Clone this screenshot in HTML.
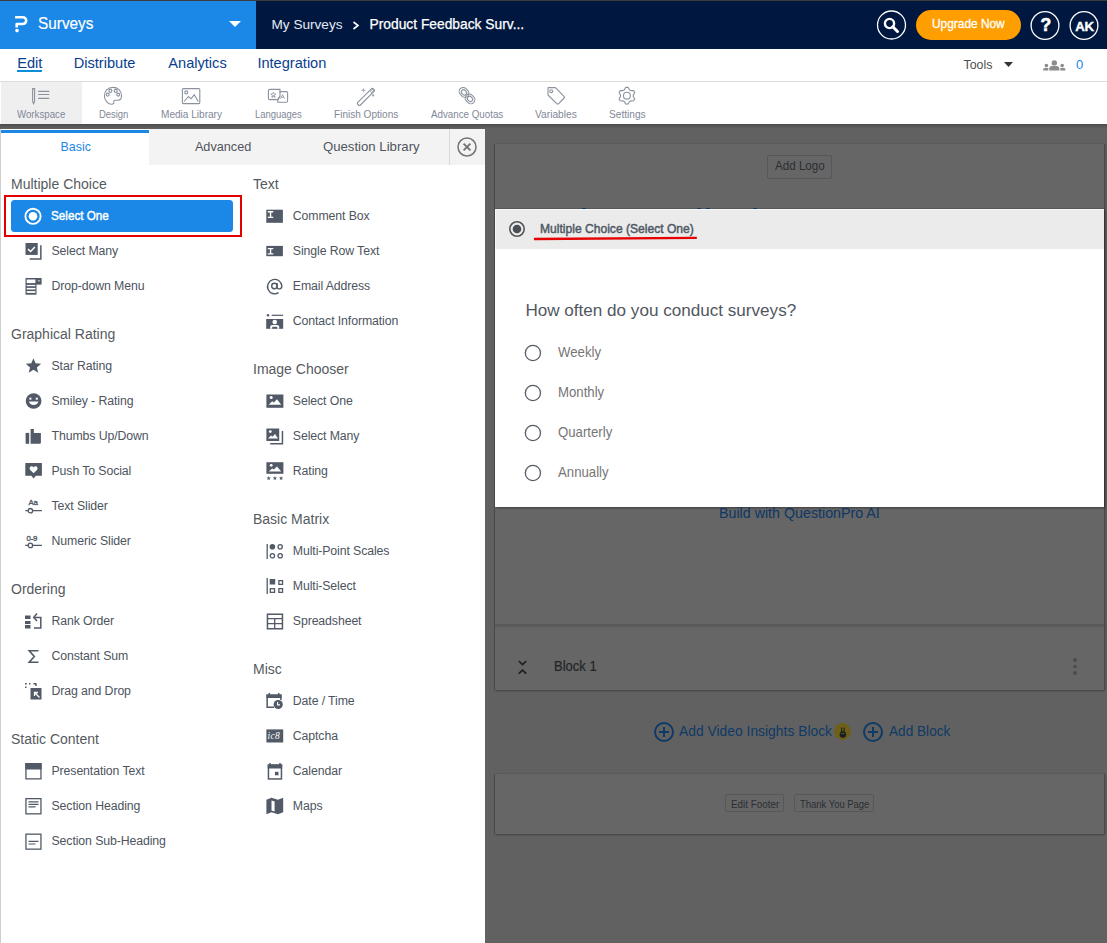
<!DOCTYPE html>
<html><head><meta charset="utf-8"><title>Surveys</title>
<style>
html,body{margin:0;padding:0;}
body{width:1107px;height:943px;overflow:hidden;position:relative;background:#616161;font-family:"Liberation Sans", sans-serif;}
.t{position:absolute;white-space:nowrap;line-height:1;}
svg{overflow:visible}
</style></head><body>
<div style="position:absolute;left:0px;top:0px;width:1107px;height:1px;background:#3c3c3c"></div>
<div style="position:absolute;left:0px;top:1px;width:256px;height:48px;background:#1b87e6"></div>
<div style="position:absolute;left:256px;top:1px;width:851px;height:48px;background:#001840"></div>
<svg style="position:absolute;left:10px;top:10px;" width="24" height="26" viewBox="0 0 24 26"><path d="M5.1 7.2 H12.8 A3.375 3.375 0 0 1 12.8 13.95 H6.7 V17.4" fill="none" stroke="#fff" stroke-width="2.6" stroke-linejoin="round"/><circle cx="7" cy="20.6" r="1.8" fill="#fff"/></svg>
<div class="t" style="left:38.3px;top:15.8px;font-size:16.8px;color:#fff;font-weight:400;letter-spacing:0px;transform:scaleX(0.915);transform-origin:0 0;-webkit-text-stroke:0.2px #fff">Surveys</div>
<svg style="position:absolute;left:229px;top:21px;" width="12" height="6" viewBox="0 0 12 6"><path d="M0 0 H12 L6 6 Z" fill="#fff"/></svg>
<div class="t" style="left:271.5px;top:17.8px;font-size:13.6px;color:#e6ebf5;font-weight:400;letter-spacing:0px;">My Surveys</div>
<svg style="position:absolute;left:352px;top:21px;" width="8" height="9" viewBox="0 0 8 9"><path d="M1.5 1 L6 4.5 L1.5 8" fill="none" stroke="#fff" stroke-width="1.6"/></svg>
<div class="t" style="left:369.5px;top:17.8px;font-size:13.8px;color:#fff;font-weight:400;letter-spacing:0px;-webkit-text-stroke:0.25px #fff">Product Feedback Surv...</div>
<svg style="position:absolute;left:876px;top:10px;" width="31" height="31" viewBox="0 0 31 31"><circle cx="15.5" cy="15" r="14" fill="none" stroke="#fff" stroke-width="1.3"/><circle cx="13.5" cy="13.5" r="4.6" fill="none" stroke="#fff" stroke-width="2.4"/><path d="M16.8 16.8 L21.5 21.5" stroke="#fff" stroke-width="3" stroke-linecap="round"/></svg>
<div style="position:absolute;left:916px;top:10px;width:105px;height:30px;background:#ff9e00;border-radius:15px"></div>
<div class="t" style="left:932.0px;top:19.4px;font-size:11.9px;color:#fff;font-weight:400;letter-spacing:0px;-webkit-text-stroke:0.3px #fff">Upgrade Now</div>
<svg style="position:absolute;left:1030.3px;top:10.9px;" width="30" height="30" viewBox="0 0 30 30"><circle cx="15" cy="14.5" r="13.9" fill="none" stroke="#fff" stroke-width="1.3"/></svg>
<div class="t" style="left:1040.4px;top:16.9px;font-size:17.5px;color:#fff;font-weight:700;letter-spacing:0px;-webkit-text-stroke:0.6px #fff">?</div>
<svg style="position:absolute;left:1069.4px;top:10.9px;" width="30" height="30" viewBox="0 0 30 30"><circle cx="15" cy="14.5" r="13.9" fill="none" stroke="#fff" stroke-width="1.3"/></svg>
<div class="t" style="left:1075.3px;top:19.7px;font-size:13.2px;color:#fff;font-weight:700;letter-spacing:-0.3px;-webkit-text-stroke:0.4px #fff">AK</div>
<div style="position:absolute;left:0px;top:49px;width:1107px;height:32px;background:#fff"></div>
<div style="position:absolute;left:0px;top:81px;width:1107px;height:1px;background:#dcdcdc"></div>
<div class="t" style="left:17.2px;top:55.6px;font-size:14.6px;color:#073e8e;font-weight:400;letter-spacing:0px;">Edit</div>
<div class="t" style="left:73.7px;top:55.6px;font-size:14.6px;color:#073e8e;font-weight:400;letter-spacing:0px;">Distribute</div>
<div class="t" style="left:168.3px;top:55.6px;font-size:14.6px;color:#073e8e;font-weight:400;letter-spacing:0px;">Analytics</div>
<div class="t" style="left:257.4px;top:55.6px;font-size:14.6px;color:#073e8e;font-weight:400;letter-spacing:0px;">Integration</div>
<div style="position:absolute;left:17px;top:70px;width:25px;height:2px;background:#0a8fd8"></div>
<div class="t" style="left:963.5px;top:58.5px;font-size:12.4px;color:#4f4f4f;font-weight:400;letter-spacing:0px;">Tools</div>
<svg style="position:absolute;left:1004px;top:62px;" width="9" height="5" viewBox="0 0 9 5"><path d="M0 0 H9 L4.5 5 Z" fill="#333"/></svg>
<svg style="position:absolute;left:1042px;top:57px;" width="24" height="14" viewBox="0 0 24 14"><circle cx="12.3" cy="5.9" r="2.7" fill="#8c8c8c"/><path d="M7.3 13.6 V11.5 Q7.3 9 10 9 H14.6 Q17.3 9 17.3 11.5 V13.6 Z" fill="#8c8c8c"/><circle cx="4.4" cy="8.6" r="1.8" fill="#8c8c8c"/><path d="M1.3 13.6 V12.3 Q1.3 10.9 2.8 10.9 H6.3 V13.6 Z" fill="#8c8c8c"/><circle cx="20.2" cy="8.6" r="1.8" fill="#8c8c8c"/><path d="M23.3 13.6 V12.3 Q23.3 10.9 21.8 10.9 H18.3 V13.6 Z" fill="#8c8c8c"/></svg>
<div class="t" style="left:1076.0px;top:58.0px;font-size:13px;color:#1b87e6;font-weight:400;letter-spacing:0px;">0</div>
<div style="position:absolute;left:0px;top:82px;width:1107px;height:42px;background:#fff"></div>
<div style="position:absolute;left:1px;top:82px;width:81px;height:42px;background:#efefef"></div>
<div class="t" style="left:17.2px;top:108.8px;font-size:11px;color:#7f8898;font-weight:400;letter-spacing:0px;transform:scaleX(0.881);transform-origin:0 0">Workspace</div>
<div class="t" style="left:98.7px;top:108.8px;font-size:11px;color:#7f8898;font-weight:400;letter-spacing:0px;transform:scaleX(0.856);transform-origin:0 0">Design</div>
<div class="t" style="left:160.8px;top:108.8px;font-size:11px;color:#7f8898;font-weight:400;letter-spacing:0px;transform:scaleX(0.915);transform-origin:0 0">Media Library</div>
<div class="t" style="left:254.7px;top:108.8px;font-size:11px;color:#7f8898;font-weight:400;letter-spacing:0px;transform:scaleX(0.858);transform-origin:0 0">Languages</div>
<div class="t" style="left:333.7px;top:108.8px;font-size:11px;color:#7f8898;font-weight:400;letter-spacing:0px;transform:scaleX(0.914);transform-origin:0 0">Finish Options</div>
<div class="t" style="left:430.8px;top:108.8px;font-size:11px;color:#7f8898;font-weight:400;letter-spacing:0px;transform:scaleX(0.888);transform-origin:0 0">Advance Quotas</div>
<div class="t" style="left:534.9px;top:108.8px;font-size:11px;color:#7f8898;font-weight:400;letter-spacing:0px;transform:scaleX(0.928);transform-origin:0 0">Variables</div>
<div class="t" style="left:608.7px;top:108.8px;font-size:11px;color:#7f8898;font-weight:400;letter-spacing:0px;transform:scaleX(0.921);transform-origin:0 0">Settings</div>
<svg style="position:absolute;left:0;top:0" width="700" height="124" viewBox="0 0 700 124"><path d="M32.6 88.6 H34.6 V101.5 L33.6 103.6 L32.6 101.5 Z" fill="none" stroke="#8a929e" stroke-width="1.1"/><path d="M38.1 91.4 H49.3 M38.1 94.5 H49.3 M38.1 98.4 H49.3" fill="none" stroke="#8a929e" stroke-width="1.1"/><path d="M113 87.4 C107.6 87.4 104.4 91.5 104.4 95.8 C104.4 100.8 108.3 104.3 111.6 104.3 C113.4 104.3 114.3 103.4 113.9 102.2 C113.4 100.9 114 100.2 115.3 100.2 H118 C120.4 100.2 121.5 98.3 121.5 95.8 C121.5 90.8 117.6 87.4 113 87.4 Z" fill="none" stroke="#8a929e" stroke-width="1.1"/><circle cx="110.4" cy="90.9" r="1.5" fill="none" stroke="#8a929e" stroke-width="1.1"/><circle cx="115.7" cy="90.9" r="1.5" fill="none" stroke="#8a929e" stroke-width="1.1"/><circle cx="107.7" cy="94.6" r="1.5" fill="none" stroke="#8a929e" stroke-width="1.1"/><circle cx="118.2" cy="94.6" r="1.5" fill="none" stroke="#8a929e" stroke-width="1.1"/><rect x="182.4" y="88.6" width="17.4" height="15" rx="1" fill="none" stroke="#8a929e" stroke-width="1.1"/><circle cx="186.2" cy="92.4" r="1.5" fill="none" stroke="#8a929e" stroke-width="1.1"/><path d="M184 101.5 L188.5 96.5 L191 98.8 L194.2 94.8 L198.2 101.5" fill="none" stroke="#8a929e" stroke-width="1.1"/><path d="M269.8 89.4 H280 V96.5 L277.6 99.6 H269.8 Q268.4 99.6 268.4 98.2 V90.8 Q268.4 89.4 269.8 89.4 Z" fill="none" stroke="#8a929e" stroke-width="1.1"/><path d="M279.5 91.6 H286.2 Q287.6 91.6 287.6 93 V100.8 Q287.6 102.2 286.2 102.2 H277.8 V99.6" fill="none" stroke="#8a929e" stroke-width="1.1" fill="#fff"/><path d="M277.8 99.6 L279.8 96.5" fill="none" stroke="#8a929e" stroke-width="1.1"/><path d="M273.4 92.2 L274.1 94 L276 94 L274.5 95.1 L275.1 96.9 L273.4 95.8 L271.7 96.9 L272.3 95.1 L270.8 94 L272.7 94 Z M272 98.2 L273.4 95.8 L275.2 98.2" fill="none" stroke="#8a929e" stroke-width="0.7"/><path d="M280.6 98.8 L282.6 94.6 L284.6 98.8 M281.4 97.3 H283.8" fill="none" stroke="#8a929e" stroke-width="0.8"/><path d="M357.8 102.4 L371.4 88.8 Q372.4 87.8 373.4 88.8 L374 89.4 Q375 90.4 374 91.4 L360.4 105 Q359.4 106 358.4 105 L357.8 104.4 Q356.8 103.4 357.8 102.4 Z" fill="none" stroke="#8a929e" stroke-width="1.1"/><path d="M369.6 90.6 L372.2 93.2 M370.8 89.6 L373.2 92 M371.8 88.8 L374 91" stroke="#8a929e" stroke-width="0.8"/><path d="M363.4 87.8 L364.1 89.6 L365.9 90.3 L364.1 91 L363.4 92.8 L362.7 91 L360.9 90.3 L362.7 89.6 Z" fill="#aab0b9"/><circle cx="373.1" cy="95.4" r="1.1" fill="#9aa1ab"/><g transform="rotate(-45 464 92.4)"><rect x="460" y="87.2" width="8" height="10.4" rx="4" fill="none" stroke="#8a929e" stroke-width="1.1"/><rect x="461.8" y="89.6" width="4.4" height="5.6" rx="2.2" fill="none" stroke="#8a929e" stroke-width="1.1"/></g><g transform="rotate(-45 470 98.9)"><rect x="466" y="93.7" width="8" height="10.4" rx="4" fill="none" stroke="#8a929e" stroke-width="1.1"/><rect x="467.8" y="96.1" width="4.4" height="5.6" rx="2.2" fill="none" stroke="#8a929e" stroke-width="1.1"/></g><path d="M548.2 87.6 H555.5 L564.2 96.6 Q564.8 97.3 564.2 98 L558.4 103.8 Q557.7 104.4 557 103.8 L548 95 V88 Z" fill="none" stroke="#8a929e" stroke-width="1.1" stroke-linejoin="round"/><circle cx="551.2" cy="91.2" r="1.4" fill="none" stroke="#8a929e" stroke-width="1.1"/><path d="M626.90,87.30 L628.00,87.37 L628.82,88.55 L629.35,89.79 L630.10,90.16 L630.80,90.62 L632.13,90.47 L633.56,90.59 L634.17,91.50 L634.66,92.49 L634.05,93.78 L633.25,94.86 L633.30,95.70 L633.25,96.54 L634.05,97.62 L634.66,98.91 L634.17,99.90 L633.56,100.81 L632.13,100.93 L630.80,100.78 L630.10,101.24 L629.35,101.61 L628.82,102.85 L628.00,104.03 L626.90,104.10 L625.80,104.03 L624.98,102.85 L624.45,101.61 L623.70,101.24 L623.00,100.78 L621.67,100.93 L620.24,100.81 L619.63,99.90 L619.14,98.91 L619.75,97.62 L620.55,96.54 L620.50,95.70 L620.55,94.86 L619.75,93.78 L619.14,92.49 L619.63,91.50 L620.24,90.59 L621.67,90.47 L623.00,90.62 L623.70,90.16 L624.45,89.79 L624.98,88.55 L625.80,87.37 Z" fill="none" stroke="#8a929e" stroke-width="1.1" stroke-linejoin="round"/><circle cx="626.9" cy="95.7" r="3.4" fill="none" stroke="#8a929e" stroke-width="1.1"/></svg>
<div style="position:absolute;left:0px;top:124px;width:1107px;height:819px;background:#616161"></div>
<div style="position:absolute;left:0px;top:124px;width:1107px;height:5px;background:linear-gradient(#4a4a4a,#5c5c5c 60%,#616161)"></div>
<div style="position:absolute;left:0px;top:129px;width:485px;height:814px;background:#fff"></div>
<div style="position:absolute;left:0px;top:129px;width:1px;height:814px;background:#cfcfcf"></div>
<div style="position:absolute;left:149px;top:129px;width:336px;height:36px;background:#f3f3f3"></div>
<div style="position:absolute;left:449px;top:129px;width:1px;height:36px;background:#d9d9d9"></div>
<div style="position:absolute;left:1px;top:130px;width:148px;height:3px;background:#1b87e6"></div>
<div class="t" style="left:60.6px;top:140.5px;font-size:12.4px;color:#1b87e6;font-weight:400;letter-spacing:0px;">Basic</div>
<div class="t" style="left:194.9px;top:140.8px;font-size:12.7px;color:#50555c;font-weight:400;letter-spacing:0px;">Advanced</div>
<div class="t" style="left:322.9px;top:139.8px;font-size:13.2px;color:#50555c;font-weight:400;letter-spacing:0px;">Question Library</div>
<svg style="position:absolute;left:457px;top:137px;" width="20" height="20" viewBox="0 0 20 20"><circle cx="10" cy="10" r="9" fill="none" stroke="#737373" stroke-width="1.5"/><path d="M6.6 6.6 L13.4 13.4 M13.4 6.6 L6.6 13.4" stroke="#737373" stroke-width="1.9"/></svg>
<div class="t" style="left:11.0px;top:176.9px;font-size:14px;color:#555a60;font-weight:400;letter-spacing:0px;">Multiple Choice</div>
<div style="position:absolute;left:10.8px;top:200px;width:222.2px;height:32px;background:#1b87e6;border-radius:3.5px"></div>
<svg style="position:absolute;left:24px;top:207px;" width="18" height="18" viewBox="0 0 18 18"><circle cx="9" cy="9.3" r="7.6" fill="none" stroke="#fff" stroke-width="1.9"/><circle cx="9" cy="9.3" r="4.3" fill="#fff"/></svg>
<div class="t" style="left:50.9px;top:208.5px;font-size:13.6px;color:#fff;font-weight:400;letter-spacing:0px;transform:scaleX(0.86);transform-origin:0 0;-webkit-text-stroke:0.45px #fff">Select One</div>
<div style="position:absolute;left:4px;top:195px;width:237.6px;height:41.6px;border:2px solid #e30000;box-sizing:border-box"></div>
<div class="t" style="left:51.5px;top:245.1px;font-size:12.3px;color:#4d545e;font-weight:400;letter-spacing:-0.1px;">Select Many</div>
<svg style="position:absolute;left:23.5px;top:242px;" width="20" height="20" viewBox="0 0 20 20"><rect x="1.5" y="1" width="12.2" height="11.9" fill="#515a66"/><path d="M4 7.1 L6.6 9.5 L10.9 5.1" fill="none" stroke="#fff" stroke-width="1.5"/><path d="M16.85 3.3 V16.9 H5.7" fill="none" stroke="#515a66" stroke-width="1.5"/></svg>
<div class="t" style="left:51.5px;top:280.1px;font-size:12.3px;color:#4d545e;font-weight:400;letter-spacing:-0.1px;">Drop-down Menu</div>
<svg style="position:absolute;left:23.5px;top:277px;" width="20" height="20" viewBox="0 0 20 20"><rect x="1.5" y="1" width="11" height="16.7" fill="#515a66"/><rect x="12" y="1" width="5.6" height="6.6" fill="#515a66"/><rect x="2.7" y="2.5" width="8.7" height="3.6" fill="#fff"/><rect x="2.7" y="7.9" width="8.7" height="1.3" fill="#fff"/><rect x="2.7" y="10.9" width="8.7" height="1.6" fill="#fff"/><rect x="2.7" y="14.1" width="8.7" height="1.8" fill="#fff"/><path d="M13.5 3.2 H16.3 L14.9 5 Z" fill="#c9ccd1"/></svg>
<div class="t" style="left:11.0px;top:326.9px;font-size:14px;color:#555a60;font-weight:400;letter-spacing:0px;">Graphical Rating</div>
<div class="t" style="left:51.5px;top:360.1px;font-size:12.3px;color:#4d545e;font-weight:400;letter-spacing:-0.1px;">Star Rating</div>
<svg style="position:absolute;left:23.5px;top:357px;" width="20" height="20" viewBox="0 0 20 20"><path d="M9.45,1.20 L11.57,6.36 L17.13,6.78 L12.87,10.38 L14.19,15.80 L9.45,12.87 L4.71,15.80 L6.03,10.38 L1.77,6.78 L7.33,6.36 Z" fill="#515a66"/></svg>
<div class="t" style="left:51.5px;top:395.1px;font-size:12.3px;color:#4d545e;font-weight:400;letter-spacing:-0.1px;">Smiley - Rating</div>
<svg style="position:absolute;left:23.5px;top:392px;" width="20" height="20" viewBox="0 0 20 20"><circle cx="9.6" cy="9" r="7.85" fill="#515a66"/><rect x="5.4" y="5.7" width="2" height="2" fill="#fff"/><rect x="11.8" y="5.7" width="2" height="2" fill="#fff"/><path d="M5 9.6 H14.3 C14 11.9 12 13.1 9.65 13.1 C7.3 13.1 5.3 11.9 5 9.6 Z" fill="#fff"/></svg>
<div class="t" style="left:51.5px;top:430.1px;font-size:12.3px;color:#4d545e;font-weight:400;letter-spacing:-0.1px;">Thumbs Up/Down</div>
<svg style="position:absolute;left:23.5px;top:427px;" width="20" height="20" viewBox="0 0 20 20"><rect x="1.6" y="5.9" width="3.6" height="10.9" fill="#515a66"/><path d="M6.6 16.8 V2 H9.9 V6.1 H16.9 V15.6 Q16.9 16.8 15.7 16.8 Z" fill="#515a66"/></svg>
<div class="t" style="left:51.5px;top:465.1px;font-size:12.3px;color:#4d545e;font-weight:400;letter-spacing:-0.1px;">Push To Social</div>
<svg style="position:absolute;left:23.5px;top:462px;" width="20" height="20" viewBox="0 0 20 20"><path d="M1.3 1.1 H17.9 V13.8 H11.8 L9.6 16.6 L7.4 13.8 H1.3 Z" fill="#515a66"/><path d="M9.6 11.2 L6.2 7.9 C5.1 6.8 5.5 4.4 7.4 4.3 C8.5 4.2 9.2 5 9.6 5.6 C10 5 10.7 4.2 11.8 4.3 C13.7 4.4 14.1 6.8 13 7.9 Z" fill="#fff"/></svg>
<div class="t" style="left:51.5px;top:500.1px;font-size:12.3px;color:#4d545e;font-weight:400;letter-spacing:-0.1px;">Text Slider</div>
<svg style="position:absolute;left:23.5px;top:497px;" width="20" height="20" viewBox="0 0 20 20"><text x="4.6" y="7.9" font-size="7.8" font-family="Liberation Sans" fill="#515a66" stroke="#515a66" stroke-width="0.35" letter-spacing="-0.2">Aa</text><circle cx="6.4" cy="13.7" r="2.2" fill="none" stroke="#515a66" stroke-width="1.3"/><path d="M1.3 13.7 H4.2 M8.6 13.7 H17.9" stroke="#515a66" stroke-width="1.3"/></svg>
<div class="t" style="left:51.5px;top:535.1px;font-size:12.3px;color:#4d545e;font-weight:400;letter-spacing:-0.1px;">Numeric Slider</div>
<svg style="position:absolute;left:23.5px;top:532px;" width="20" height="20" viewBox="0 0 20 20"><text x="2.6" y="8.6" font-size="7.8" font-family="Liberation Sans" fill="#515a66" stroke="#515a66" stroke-width="0.35" letter-spacing="-0.3">0-9</text><circle cx="6.4" cy="13.4" r="2.2" fill="none" stroke="#515a66" stroke-width="1.3"/><path d="M1.3 13.4 H4.2 M8.6 13.4 H17.9" stroke="#515a66" stroke-width="1.3"/></svg>
<div class="t" style="left:11.0px;top:581.9px;font-size:14px;color:#555a60;font-weight:400;letter-spacing:0px;">Ordering</div>
<div class="t" style="left:51.5px;top:615.1px;font-size:12.3px;color:#4d545e;font-weight:400;letter-spacing:-0.1px;">Rank Order</div>
<svg style="position:absolute;left:23.5px;top:612px;" width="20" height="20" viewBox="0 0 20 20"><rect x="1" y="3.5" width="5.5" height="3.5" fill="#515a66"/><rect x="1" y="9" width="5.5" height="3" fill="#515a66"/><rect x="1" y="13" width="5.5" height="3.5" fill="#515a66"/><path d="M10.5 5.5 H16.8 V16 H10" fill="none" stroke="#515a66" stroke-width="1.5"/><path d="M13 1.5 L9.7 5.5 L13 9" fill="none" stroke="#515a66" stroke-width="1.5"/></svg>
<div class="t" style="left:51.5px;top:650.1px;font-size:12.3px;color:#4d545e;font-weight:400;letter-spacing:-0.1px;">Constant Sum</div>
<svg style="position:absolute;left:23.5px;top:647px;" width="20" height="20" viewBox="0 0 20 20"><path d="M14.5 3.8 H5.2 L10.3 9.5 L5.2 15.2 H14.5" fill="none" stroke="#515a66" stroke-width="1.6"/></svg>
<div class="t" style="left:51.5px;top:685.1px;font-size:12.3px;color:#4d545e;font-weight:400;letter-spacing:-0.1px;">Drag and Drop</div>
<svg style="position:absolute;left:23.5px;top:682px;" width="20" height="20" viewBox="0 0 20 20"><path d="M1 1.8 H2.8 M5 1.8 H6.5 M9.5 1.8 H12.5 M1.8 4.5 V6 M12 2.5 V4" stroke="#515a66" stroke-width="1.5"/><rect x="6.5" y="6" width="11" height="11.5" fill="#515a66"/><path d="M15.5 15.5 L10.8 10.8 M10.5 14 V10.5 H14" fill="none" stroke="#fff" stroke-width="1.3"/></svg>
<div class="t" style="left:11.0px;top:731.9px;font-size:14px;color:#555a60;font-weight:400;letter-spacing:0px;">Static Content</div>
<div class="t" style="left:51.5px;top:765.1px;font-size:12.3px;color:#4d545e;font-weight:400;letter-spacing:-0.1px;">Presentation Text</div>
<svg style="position:absolute;left:23.5px;top:762px;" width="20" height="20" viewBox="0 0 20 20"><rect x="1.95" y="1.65" width="15" height="15.2" fill="none" stroke="#515a66" stroke-width="1.3"/><rect x="1.3" y="1" width="16.3" height="6.5" fill="#515a66"/></svg>
<div class="t" style="left:51.5px;top:800.1px;font-size:12.3px;color:#4d545e;font-weight:400;letter-spacing:-0.1px;">Section Heading</div>
<svg style="position:absolute;left:23.5px;top:797px;" width="20" height="20" viewBox="0 0 20 20"><rect x="1.95" y="1.65" width="15" height="15.2" fill="none" stroke="#515a66" stroke-width="1.3"/><path d="M4.5 4.9 H14.5 M4.5 7.4 H14.5 M4.5 9.9 H11.5" stroke="#515a66" stroke-width="1.1"/></svg>
<div class="t" style="left:51.5px;top:835.1px;font-size:12.3px;color:#4d545e;font-weight:400;letter-spacing:-0.1px;">Section Sub-Heading</div>
<svg style="position:absolute;left:23.5px;top:832px;" width="20" height="20" viewBox="0 0 20 20"><rect x="1.95" y="2.15" width="15" height="15" fill="none" stroke="#515a66" stroke-width="1.3"/><path d="M4.5 9.4 H14.5 M4.5 12 H11.5" stroke="#515a66" stroke-width="1.1"/></svg>
<div class="t" style="left:253.0px;top:176.9px;font-size:14px;color:#555a60;font-weight:400;letter-spacing:0px;">Text</div>
<div class="t" style="left:292.8px;top:210.1px;font-size:12.3px;color:#4d545e;font-weight:400;letter-spacing:-0.1px;">Comment Box</div>
<svg style="position:absolute;left:264.8px;top:207px;" width="20" height="20" viewBox="0 0 20 20"><rect x="1.3" y="2.7" width="16.6" height="13.1" fill="#515a66"/><path d="M2.8 4.8 H8.3 M2.8 10.4 H8.3 M5.55 4.8 V10.4" stroke="#fff" stroke-width="1.4"/></svg>
<div class="t" style="left:292.8px;top:245.1px;font-size:12.3px;color:#4d545e;font-weight:400;letter-spacing:-0.1px;">Single Row Text</div>
<svg style="position:absolute;left:264.8px;top:242px;" width="20" height="20" viewBox="0 0 20 20"><rect x="1.3" y="3.9" width="16.6" height="10.3" fill="#515a66"/><path d="M2.8 6.6 H8.3 M2.8 11.9 H8.3 M5.55 6.6 V11.9" stroke="#fff" stroke-width="1.4"/></svg>
<div class="t" style="left:292.8px;top:280.1px;font-size:12.3px;color:#4d545e;font-weight:400;letter-spacing:-0.1px;">Email Address</div>
<svg style="position:absolute;left:264.8px;top:277px;" width="20" height="20" viewBox="0 0 20 20"><circle cx="9.4" cy="9" r="2.7" fill="none" stroke="#515a66" stroke-width="1.4"/><path d="M12.1 6 V10.6 C12.1 12.4 16.9 12.6 16.9 9 A7.2 7.2 0 1 0 13.6 15.7" fill="none" stroke="#515a66" stroke-width="1.4"/></svg>
<div class="t" style="left:292.8px;top:315.1px;font-size:12.3px;color:#4d545e;font-weight:400;letter-spacing:-0.1px;">Contact Information</div>
<svg style="position:absolute;left:264.8px;top:312px;" width="20" height="20" viewBox="0 0 20 20"><circle cx="3" cy="3.3" r="1.2" fill="#515a66"/><path d="M6.7 3.3 H18.2" stroke="#515a66" stroke-width="1.2"/><rect x="1.2" y="7" width="17" height="9.8" fill="#515a66"/><circle cx="9.7" cy="10" r="2.3" fill="#fff"/><path d="M5.2 16.8 V14.8 Q5.2 13 7.2 13 H12.2 Q14.2 13 14.2 14.8 V16.8 Z" fill="#fff"/><rect x="7.2" y="14.8" width="5" height="2" fill="#515a66"/></svg>
<div class="t" style="left:253.0px;top:361.9px;font-size:14px;color:#555a60;font-weight:400;letter-spacing:0px;">Image Chooser</div>
<div class="t" style="left:292.8px;top:395.1px;font-size:12.3px;color:#4d545e;font-weight:400;letter-spacing:-0.1px;">Select One</div>
<svg style="position:absolute;left:264.8px;top:392px;" width="20" height="20" viewBox="0 0 20 20"><rect x="1.4" y="2.5" width="17" height="13.3" fill="#515a66"/><circle cx="6.2" cy="5.6" r="1.5" fill="#fff"/><path d="M3.7 12.8 L7.2 9.3 L8.8 10.6 L12 7.3 L16.2 12.8 Z" fill="#fff"/></svg>
<div class="t" style="left:292.8px;top:430.1px;font-size:12.3px;color:#4d545e;font-weight:400;letter-spacing:-0.1px;">Select Many</div>
<svg style="position:absolute;left:264.8px;top:427px;" width="20" height="20" viewBox="0 0 20 20"><rect x="1.4" y="1.5" width="12.8" height="12.5" fill="#515a66"/><circle cx="5.3" cy="4.6" r="1.4" fill="#fff"/><path d="M3 11.6 L6 8.6 L7.4 9.7 L10 7 L13 11.6 Z" fill="#fff"/><path d="M17.45 4 V16.75 H5.2" fill="none" stroke="#515a66" stroke-width="1.5"/></svg>
<div class="t" style="left:292.8px;top:465.1px;font-size:12.3px;color:#4d545e;font-weight:400;letter-spacing:-0.1px;">Rating</div>
<svg style="position:absolute;left:264.8px;top:462px;" width="20" height="20" viewBox="0 0 20 20"><rect x="1.4" y="0.2" width="17" height="11.6" fill="#515a66"/><circle cx="6.2" cy="3.3" r="1.4" fill="#fff"/><path d="M3.7 9.6 L7.2 6.4 L8.8 7.6 L12 4.6 L16.2 9.6 Z" fill="#fff"/><path d="M3.70,13.90 L4.29,15.39 L5.89,15.49 L4.65,16.51 L5.05,18.06 L3.70,17.20 L2.35,18.06 L2.75,16.51 L1.51,15.49 L3.11,15.39 Z M9.90,13.90 L10.49,15.39 L12.09,15.49 L10.85,16.51 L11.25,18.06 L9.90,17.20 L8.55,18.06 L8.95,16.51 L7.71,15.49 L9.31,15.39 Z M16.10,13.90 L16.69,15.39 L18.29,15.49 L17.05,16.51 L17.45,18.06 L16.10,17.20 L14.75,18.06 L15.15,16.51 L13.91,15.49 L15.51,15.39 Z" fill="#515a66"/></svg>
<div class="t" style="left:253.0px;top:511.9px;font-size:14px;color:#555a60;font-weight:400;letter-spacing:0px;">Basic Matrix</div>
<div class="t" style="left:292.8px;top:545.1px;font-size:12.3px;color:#4d545e;font-weight:400;letter-spacing:-0.1px;">Multi-Point Scales</div>
<svg style="position:absolute;left:264.8px;top:542px;" width="20" height="20" viewBox="0 0 20 20"><path d="M2.2 2 V17" stroke="#515a66" stroke-width="1.3"/><circle cx="7.4" cy="4.8" r="2.8" fill="#515a66"/><circle cx="15.2" cy="4.8" r="2.15" fill="none" stroke="#515a66" stroke-width="1.3"/><circle cx="7.4" cy="13.8" r="2.15" fill="none" stroke="#515a66" stroke-width="1.3"/><circle cx="15.2" cy="13.8" r="2.15" fill="none" stroke="#515a66" stroke-width="1.3"/></svg>
<div class="t" style="left:292.8px;top:580.1px;font-size:12.3px;color:#4d545e;font-weight:400;letter-spacing:-0.1px;">Multi-Select</div>
<svg style="position:absolute;left:264.8px;top:577px;" width="20" height="20" viewBox="0 0 20 20"><path d="M2.2 1 V17" stroke="#515a66" stroke-width="1.3"/><rect x="4.7" y="2" width="5.5" height="5.5" fill="#515a66"/><rect x="13.85" y="3.65" width="3.7" height="3.7" fill="none" stroke="#515a66" stroke-width="1.3"/><rect x="5.35" y="11.65" width="4.2" height="3.7" fill="none" stroke="#515a66" stroke-width="1.3"/><rect x="13.85" y="11.65" width="3.7" height="3.7" fill="none" stroke="#515a66" stroke-width="1.3"/></svg>
<div class="t" style="left:292.8px;top:615.1px;font-size:12.3px;color:#4d545e;font-weight:400;letter-spacing:-0.1px;">Spreadsheet</div>
<svg style="position:absolute;left:264.8px;top:612px;" width="20" height="20" viewBox="0 0 20 20"><rect x="2.45" y="2.25" width="15" height="14.5" fill="none" stroke="#515a66" stroke-width="1.5"/><path d="M2.45 6.7 H17.45 M2.45 11.7 H17.45 M9.7 6.7 V16.75" stroke="#515a66" stroke-width="1.3"/></svg>
<div class="t" style="left:253.0px;top:661.9px;font-size:14px;color:#555a60;font-weight:400;letter-spacing:0px;">Misc</div>
<div class="t" style="left:292.8px;top:695.1px;font-size:12.3px;color:#4d545e;font-weight:400;letter-spacing:-0.1px;">Date / Time</div>
<svg style="position:absolute;left:264.8px;top:692px;" width="20" height="20" viewBox="0 0 20 20"><path d="M4.3 1 V4 M13.7 1 V4" stroke="#515a66" stroke-width="1.5"/><path d="M9 15.3 H2.15 V3.2 H15.85 V8" fill="none" stroke="#515a66" stroke-width="1.5"/><rect x="1.4" y="2.5" width="15.2" height="3.5" fill="#515a66"/><circle cx="13.2" cy="12.5" r="4.6" fill="#515a66"/><path d="M12.6 10 V12.9 H15" fill="none" stroke="#fff" stroke-width="1.1"/></svg>
<div class="t" style="left:292.8px;top:730.1px;font-size:12.3px;color:#4d545e;font-weight:400;letter-spacing:-0.1px;">Captcha</div>
<svg style="position:absolute;left:264.8px;top:727px;" width="20" height="20" viewBox="0 0 20 20"><rect x="1.4" y="2.4" width="16.8" height="13.1" fill="#515a66"/><text x="2.4" y="12" font-size="9.5" font-style="italic" font-family="Liberation Serif" fill="#fff" letter-spacing="0.4">ic8</text></svg>
<div class="t" style="left:292.8px;top:765.1px;font-size:12.3px;color:#4d545e;font-weight:400;letter-spacing:-0.1px;">Calendar</div>
<svg style="position:absolute;left:264.8px;top:762px;" width="20" height="20" viewBox="0 0 20 20"><path d="M5 1 V4 M15 1 V4" stroke="#515a66" stroke-width="1.5"/><rect x="3.45" y="3.1" width="13" height="13.85" fill="none" stroke="#515a66" stroke-width="1.5"/><rect x="2.7" y="2.5" width="14.5" height="4" fill="#515a66"/><rect x="10" y="9.8" width="3.5" height="3.5" fill="#515a66"/></svg>
<div class="t" style="left:292.8px;top:800.1px;font-size:12.3px;color:#4d545e;font-weight:400;letter-spacing:-0.1px;">Maps</div>
<svg style="position:absolute;left:264.8px;top:797px;" width="20" height="20" viewBox="0 0 20 20"><path d="M1.4 2.7 L6.5 0.7 L12.9 2.7 L18.2 0.7 V15.2 L12.9 17.2 L6.5 15.2 L1.4 17.2 Z" fill="#515a66"/><path d="M6.5 3.6 V13.5 L9.6 14.5 V4.6 Z" fill="#fff" transform="translate(0,0)"/></svg>
<div style="position:absolute;left:495px;top:144px;width:609px;height:481px;background:#666;box-shadow:-1px 0 0 #484848,1px 0 0 #494949,0 -1px 0 #5a5a5a,0 1px 2px rgba(0,0,0,0.3),2px 0 2px rgba(0,0,0,0.12)"></div>
<div style="position:absolute;left:767px;top:154.5px;width:64.5px;height:24px;border:1px solid #575757;box-sizing:border-box;border-radius:2px"></div>
<div class="t" style="left:774.6px;top:160.2px;font-size:12.8px;color:#2a2e34;font-weight:400;letter-spacing:0px;transform:scaleX(0.907);transform-origin:0 0">Add Logo</div>
<div style="position:absolute;left:495px;top:208px;width:609px;height:1px;background:#5a5a5a"></div>
<div style="position:absolute;left:582px;top:207.5px;width:4px;height:1.5px;background:#143660;border-radius:1px"></div>
<div style="position:absolute;left:697px;top:207.5px;width:4px;height:1.5px;background:#143660;border-radius:1px"></div>
<div style="position:absolute;left:706px;top:207.5px;width:4px;height:1.5px;background:#143660;border-radius:1px"></div>
<div style="position:absolute;left:753px;top:207.5px;width:4px;height:1.5px;background:#143660;border-radius:1px"></div>
<div style="position:absolute;left:495px;top:209px;width:609px;height:298px;background:#fff;box-shadow:-1px 0 0 #474747,1px 1px 2px rgba(0,0,0,0.4)"></div>
<div style="position:absolute;left:495px;top:209px;width:609px;height:40px;background:#ebebeb;border-top:1px solid #f6f6f6;border-left:1px solid #f6f6f6;box-sizing:border-box"></div>
<div style="position:absolute;left:495px;top:249px;width:609px;height:258px;background:#fff"></div>
<svg style="position:absolute;left:508px;top:220px;" width="18" height="18" viewBox="0 0 18 18"><circle cx="9" cy="9" r="7.2" fill="none" stroke="#555" stroke-width="1.6"/><circle cx="9" cy="9" r="4.3" fill="#4a4f57"/></svg>
<div class="t" style="left:539.9px;top:222.2px;font-size:13.5px;color:#4f5865;font-weight:400;letter-spacing:0px;transform:scaleX(0.895);transform-origin:0 0;-webkit-text-stroke:0.5px #4f5865">Multiple Choice (Select One)</div>
<svg style="position:absolute;left:533px;top:235px;" width="165" height="6" viewBox="0 0 165 6"><path d="M1 4 L163.8 2.9" stroke="#e60000" stroke-width="2.3"/></svg>
<div class="t" style="left:525.4px;top:302.1px;font-size:17.1px;color:#51575f;font-weight:400;letter-spacing:0px;">How often do you conduct surveys?</div>
<svg style="position:absolute;left:524px;top:343.90000000000003px;" width="18" height="18" viewBox="0 0 18 18"><circle cx="8.9" cy="9" r="7.6" fill="none" stroke="#555c66" stroke-width="1.3"/></svg>
<div class="t" style="left:558.2px;top:345.1px;font-size:14.2px;color:#767676;font-weight:400;letter-spacing:0px;transform:scaleX(0.93);transform-origin:0 0">Weekly</div>
<svg style="position:absolute;left:524px;top:383.90000000000003px;" width="18" height="18" viewBox="0 0 18 18"><circle cx="8.9" cy="9" r="7.6" fill="none" stroke="#555c66" stroke-width="1.3"/></svg>
<div class="t" style="left:558.2px;top:385.1px;font-size:14.2px;color:#767676;font-weight:400;letter-spacing:0px;transform:scaleX(0.93);transform-origin:0 0">Monthly</div>
<svg style="position:absolute;left:524px;top:423.90000000000003px;" width="18" height="18" viewBox="0 0 18 18"><circle cx="8.9" cy="9" r="7.6" fill="none" stroke="#555c66" stroke-width="1.3"/></svg>
<div class="t" style="left:558.2px;top:425.1px;font-size:14.2px;color:#767676;font-weight:400;letter-spacing:0px;transform:scaleX(0.93);transform-origin:0 0">Quarterly</div>
<svg style="position:absolute;left:524px;top:463.90000000000003px;" width="18" height="18" viewBox="0 0 18 18"><circle cx="8.9" cy="9" r="7.6" fill="none" stroke="#555c66" stroke-width="1.3"/></svg>
<div class="t" style="left:558.2px;top:465.1px;font-size:14.2px;color:#767676;font-weight:400;letter-spacing:0px;transform:scaleX(0.93);transform-origin:0 0">Annually</div>
<div class="t" style="left:719.0px;top:506.1px;font-size:14.8px;color:#0d3764;font-weight:400;letter-spacing:0px;transform:scaleX(0.963);transform-origin:0 0">Build with QuestionPro AI</div>
<div style="position:absolute;left:495px;top:507px;width:609px;height:0px;"></div>
<div style="position:absolute;left:495px;top:625px;width:609px;height:65px;background:#666;box-shadow:-1px 0 0 #484848,1px 0 0 #494949,0 -1px 0 #5a5a5a,0 1px 2px rgba(0,0,0,0.3),2px 0 2px rgba(0,0,0,0.12)"></div>
<div style="position:absolute;left:495px;top:625px;width:609px;height:3px;background:linear-gradient(rgba(0,0,0,0.16),rgba(0,0,0,0))"></div>
<svg style="position:absolute;left:516px;top:658px;" width="13" height="18" viewBox="0 0 13 18"><path d="M2.8 3 L6.5 6.5 L10.2 3 M2.8 15.7 L6.5 12.2 L10.2 15.7" fill="none" stroke="#1e1e1e" stroke-width="1.7"/></svg>
<div class="t" style="left:553.9px;top:659.0px;font-size:14.2px;color:#202428;font-weight:400;letter-spacing:0px;transform:scaleX(0.917);transform-origin:0 0;-webkit-text-stroke:0.15px #202428">Block 1</div>
<div style="position:absolute;left:1073.1px;top:657.8px;width:3.8px;height:3.8px;background:#4d4d4d;border-radius:50%"></div>
<div style="position:absolute;left:1073.1px;top:664.5px;width:3.8px;height:3.8px;background:#4d4d4d;border-radius:50%"></div>
<div style="position:absolute;left:1073.1px;top:671.1999999999999px;width:3.8px;height:3.8px;background:#4d4d4d;border-radius:50%"></div>
<svg style="position:absolute;left:653px;top:721px;" width="22" height="22" viewBox="0 0 22 22"><circle cx="11" cy="11" r="9" fill="none" stroke="#0f3a66" stroke-width="2"/><path d="M11 6 V16 M6 11 H16" stroke="#0f3a66" stroke-width="2"/></svg>
<div class="t" style="left:679.0px;top:723.8px;font-size:14.4px;color:#0f3a66;font-weight:400;letter-spacing:0px;transform:scaleX(0.963);transform-origin:0 0">Add Video Insights Block</div>
<svg style="position:absolute;left:834px;top:723px;" width="17" height="17" viewBox="0 0 17 17"><circle cx="8.5" cy="8.5" r="8.4" fill="#6e6019"/><path d="M7.6 4.4 V9.2 M10.2 4.4 V9.2" stroke="#1e1e1e" stroke-width="1.1"/><circle cx="8.9" cy="11.6" r="3.3" fill="#1e1e1e"/><path d="M6.8 10.8 Q8.9 9.6 11 10.8" stroke="#4a5a22" stroke-width="0.9" fill="none"/></svg>
<svg style="position:absolute;left:862px;top:721px;" width="22" height="22" viewBox="0 0 22 22"><circle cx="11" cy="11" r="9" fill="none" stroke="#0f3a66" stroke-width="2"/><path d="M11 6 V16 M6 11 H16" stroke="#0f3a66" stroke-width="2"/></svg>
<div class="t" style="left:888.6px;top:723.8px;font-size:14.4px;color:#0f3a66;font-weight:400;letter-spacing:0px;transform:scaleX(0.947);transform-origin:0 0">Add Block</div>
<div style="position:absolute;left:495px;top:774px;width:609px;height:60px;background:#666;box-shadow:-1px 0 0 #484848,1px 0 0 #494949,0 -1px 0 #5a5a5a,0 1px 2px rgba(0,0,0,0.3),2px 0 2px rgba(0,0,0,0.12)"></div>
<div style="position:absolute;left:725.3px;top:794px;width:58.4px;height:18.2px;border:1px solid #585858;border-radius:2px;box-sizing:border-box"></div>
<div class="t" style="left:730.5px;top:798.2px;font-size:11.6px;color:#2a2e34;font-weight:400;letter-spacing:0px;transform:scaleX(0.851);transform-origin:0 0">Edit Footer</div>
<div style="position:absolute;left:794.2px;top:794px;width:79.4px;height:18.2px;border:1px solid #585858;border-radius:2px;box-sizing:border-box"></div>
<div class="t" style="left:799.6px;top:798.2px;font-size:11.6px;color:#2a2e34;font-weight:400;letter-spacing:0px;transform:scaleX(0.815);transform-origin:0 0">Thank You Page</div>
</body></html>
